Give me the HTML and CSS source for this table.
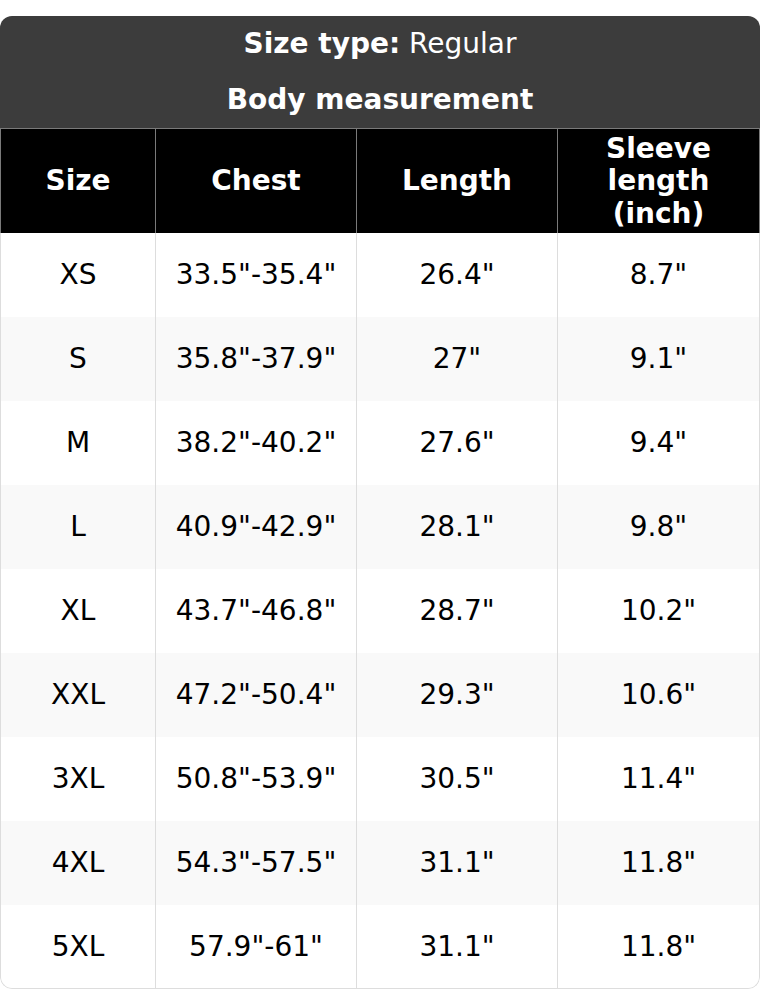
FILE: index.html
```html
<!DOCTYPE html>
<html lang="en">
<head>
<meta charset="utf-8">
<title>Size chart</title>
<link rel="stylesheet" href="styles.css">
</head>
<body>
<div class="chart">
  <div class="title">
    <p class="title-row"><b>Size type:</b> Regular</p>
    <p class="title-row"><b>Body measurement</b></p>
  </div>
  <table class="sizes">
    <colgroup>
      <col class="c1"><col class="c2"><col class="c3"><col class="c4">
    </colgroup>
    <thead>
      <tr><th>Size</th><th>Chest</th><th>Length</th><th>Sleeve length (inch)</th></tr>
    </thead>
    <tbody>
      <tr><td>XS</td><td>33.5"-35.4"</td><td>26.4"</td><td>8.7"</td></tr>
      <tr><td>S</td><td>35.8"-37.9"</td><td>27"</td><td>9.1"</td></tr>
      <tr><td>M</td><td>38.2"-40.2"</td><td>27.6"</td><td>9.4"</td></tr>
      <tr><td>L</td><td>40.9"-42.9"</td><td>28.1"</td><td>9.8"</td></tr>
      <tr><td>XL</td><td>43.7"-46.8"</td><td>28.7"</td><td>10.2"</td></tr>
      <tr><td>XXL</td><td>47.2"-50.4"</td><td>29.3"</td><td>10.6"</td></tr>
      <tr><td>3XL</td><td>50.8"-53.9"</td><td>30.5"</td><td>11.4"</td></tr>
      <tr><td>4XL</td><td>54.3"-57.5"</td><td>31.1"</td><td>11.8"</td></tr>
      <tr><td>5XL</td><td>57.9"-61"</td><td>31.1"</td><td>11.8"</td></tr>
    </tbody>
  </table>
</div>
</body>
</html>
```
FILE: styles.css
```css
html, body {
  margin: 0;
  padding: 0;
  background: #ffffff;
}
body {
  padding-top: 16px;
  font-family: "DejaVu Sans", "Noto Sans", sans-serif;
  font-size: 28px;
  line-height: 32.6px;
  color: #000000;
}
.chart {
  width: 760px;
  border-radius: 12px;
  overflow: hidden;
}
.title {
  background: #3c3c3c;
  color: #ffffff;
  text-align: center;
  border-bottom: 1px solid #7a7a7a;
}
.title-row {
  margin: 0;
  padding: 11.7px 0;
}
.sizes {
  width: 760px;
  table-layout: fixed;
  border-collapse: separate;
  border-spacing: 0;
}
.c1 { width: 155px; }
.c2 { width: 201px; }
.c3 { width: 201px; }
.c4 { width: 203px; }
.sizes th {
  background: #000000;
  color: #ffffff;
  font-weight: bold;
  height: 104px;
  padding: 1px 8px 0;
  box-sizing: border-box;
  border-left: 1px solid #7a7a7a;
  text-align: center;
  vertical-align: middle;
}
.sizes th:last-child {
  border-right: 1px solid #7a7a7a;
}
.sizes td {
  height: 84px;
  padding: 1px 4px 0;
  box-sizing: border-box;
  border-left: 1px solid #dddddd;
  text-align: center;
  vertical-align: middle;
  font-weight: normal;
}
.sizes td:last-child {
  border-right: 1px solid #dddddd;
}
.sizes tbody tr:nth-child(even) td {
  background: #f9f9f9;
}
.sizes tbody tr:last-child td {
  border-bottom: 1px solid #dddddd;
}
.sizes tbody tr:last-child td:first-child {
  border-bottom-left-radius: 12px;
}
.sizes tbody tr:last-child td:last-child {
  border-bottom-right-radius: 12px;
}
```
